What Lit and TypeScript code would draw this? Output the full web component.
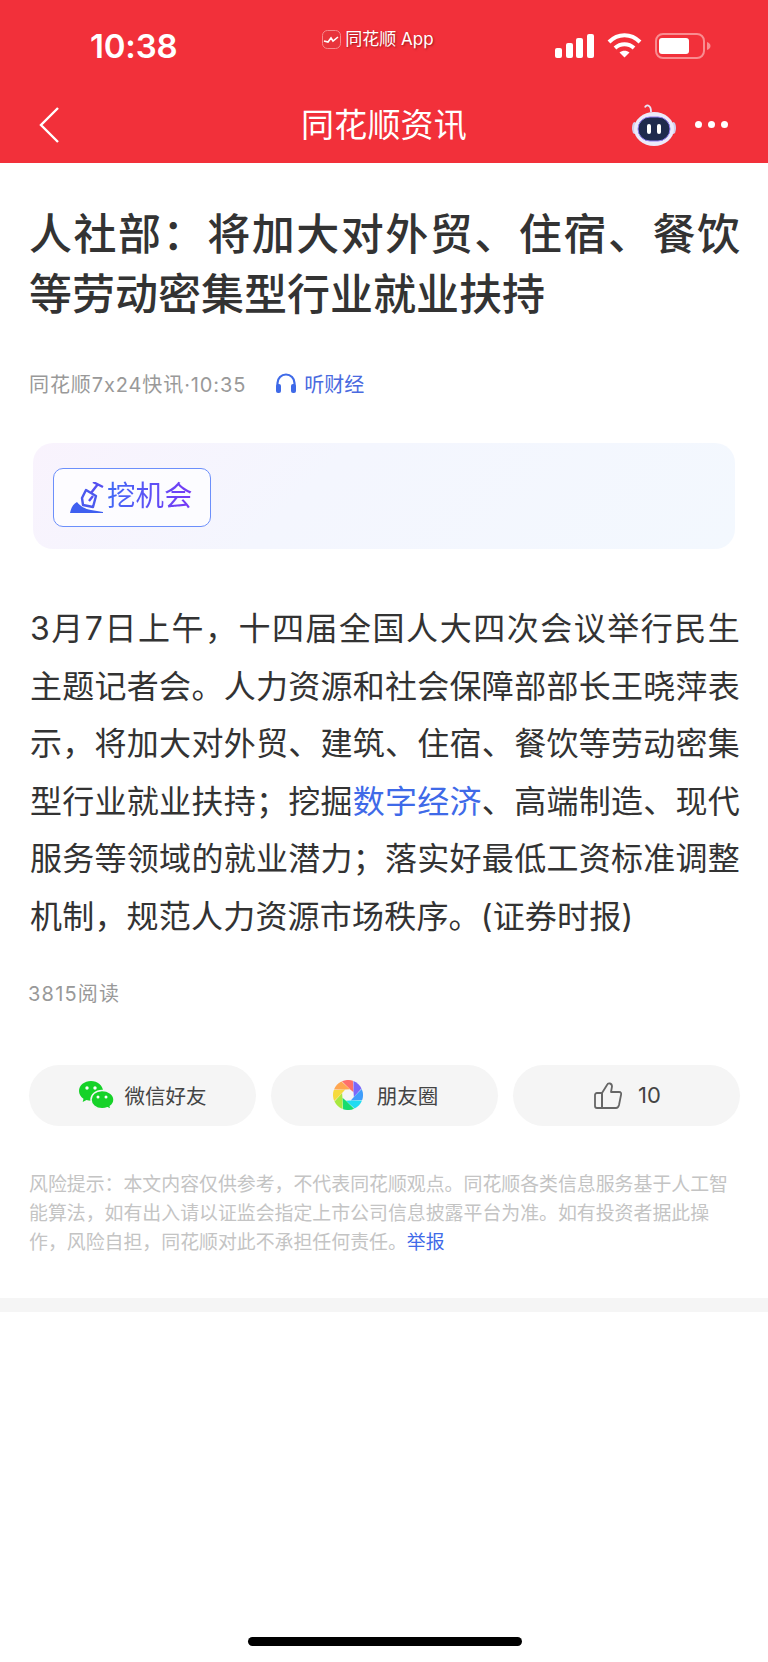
import { LitElement, html, css, svg } from "lit";
import { customElement } from "lit/decorators.js";

const COLORS = ["#ff6f6a", "#7b68fb", "#3f9dfb", "#1fdcf2", "#17dc6e", "#a9e83f", "#f6da3e", "#ffa650"];

/* One blade of the aperture logo: outer arc, then a straight edge back to the inner ring. */
function blade(i: number) {
  const r = 15, c = 15, hole = 6.2;
  const rad = (d: number) => (d * Math.PI) / 180;
  const a0 = i * 45 - 90 - 24, a1 = a0 + 43;
  const x0 = c + r * Math.cos(rad(a0)), y0 = c + r * Math.sin(rad(a0));
  const x1 = c + r * Math.cos(rad(a1)), y1 = c + r * Math.sin(rad(a1));
  const x2 = c + hole * Math.cos(rad(a1 + 45)), y2 = c + hole * Math.sin(rad(a1 + 45));
  const x3 = c + hole * Math.cos(rad(a1)), y3 = c + hole * Math.sin(rad(a1));
  return svg`<path d="M${x0.toFixed(2)} ${y0.toFixed(2)}A${r} ${r} 0 0 1 ${x1.toFixed(2)} ${y1.toFixed(2)}L${x2.toFixed(2)} ${y2.toFixed(2)}L${x3.toFixed(2)} ${y3.toFixed(2)}Z" fill=${COLORS[i]}></path>`;
}

@customElement("app-root")
export class AppRoot extends LitElement {
  static styles = css`
    :host {
      display: block;
      position: relative;
      width: 768px;
      height: 1662px;
      background: #fff;
      overflow: hidden;
      font-family: Inter, "Noto Sans CJK SC", "Noto Sans", sans-serif;
      color: #333;
    }
    .top {
      height: 163px;
      background: #f2303a;
      color: #fff;
      display: flex;
      flex-direction: column;
      box-sizing: border-box;
    }
    .status {
      height: 88px;
      display: grid;
      grid-template-columns: 1fr auto 1fr;
      align-items: start;
    }
    .time {
      font-weight: 600;
      font-size: 33px;
      line-height: 38px;
      margin: 27px 0 0 90px;
      letter-spacing: -0.2px;
    }
    .appl {
      display: flex;
      align-items: center;
      gap: 4px;
      margin: 29px 0 0 -12px;
      font-size: 17px;
      line-height: 20px;
      text-shadow: 1px 1px 2px rgba(90, 0, 0, 0.55);
    }
    .sys {
      display: flex;
      align-items: center;
      justify-content: flex-end;
      gap: 13px;
      margin: 33px 57px 0 0;
      height: 25px;
    }
    .nav {
      flex: 1;
      display: grid;
      grid-template-columns: 1fr auto 1fr;
      align-items: center;
      padding-bottom: 2px;
    }
    .back {
      margin-left: 38px;
      display: block;
    }
    .navt {
      font-size: 33px;
      line-height: 44px;
      letter-spacing: 0.2px;
    }
    .acts {
      display: flex;
      align-items: center;
      justify-content: flex-end;
      gap: 19px;
      padding-right: 40px;
    }
    .dots {
      display: flex;
      gap: 6px;
    }
    .dots i {
      width: 7px;
      height: 7px;
      border-radius: 50%;
      background: #fff;
    }
    main {
      padding: 0 28px 0 30px;
    }
    h1 {
      margin: 41px 0 0 -1px;
      font-size: 43px;
      line-height: 60px;
      font-weight: 500;
      color: #333;
      text-align: justify;
    }
    .meta {
      margin: 41px 0 0 -1px;
      display: flex;
      align-items: center;
      height: 36px;
      font-size: 20px;
      color: #999;
    }
    .src {
      letter-spacing: 0.9px;
    }
    .listen {
      margin-left: 29px;
      display: flex;
      align-items: center;
      gap: 7px;
      color: #4a6ae0;
    }
    .card {
      margin: 42px 5px 0 3px;
      height: 106px;
      border-radius: 20px;
      background: linear-gradient(135deg, #f9f3fd 0%, #f4f6fe 40%, #f3f8fe 100%);
      padding: 25px 20px;
      box-sizing: border-box;
    }
    .tag {
      display: inline-flex;
      align-items: center;
      gap: 3px;
      box-sizing: border-box;
      width: 158px;
      height: 59px;
      padding-left: 15px;
      border: 1px solid #6c8ffb;
      border-radius: 10px;
      background: rgba(255, 255, 255, 0.7);
    }
    .tagt {
      font-size: 28.5px;
      line-height: 40px;
      margin-top: -4px;
      background: linear-gradient(100deg, #3f6cf6, #7a35f5);
      -webkit-background-clip: text;
      background-clip: text;
      color: transparent;
    }
    .body {
      margin: 51px 0 0;
      font-size: 32px;
      line-height: 57.6px;
      letter-spacing: 0.2px;
      color: #333;
      text-align: justify;
    }
    .body a {
      color: #3f6ae8;
    }
    .reads {
      margin: 33px 0 0 -2px;
      font-size: 20px;
      line-height: 30px;
      letter-spacing: 1.2px;
      color: #999;
    }
    .btns {
      margin: 56px 0 0 -1px;
      display: grid;
      grid-template-columns: repeat(3, 227px);
      gap: 15px;
    }
    .btn {
      height: 61px;
      border-radius: 31px;
      background: #f5f5f5;
      display: flex;
      align-items: center;
      justify-content: center;
      gap: 11px;
      font-size: 20.5px;
      color: #444;
    }
    .moments {
      gap: 14px;
      padding-left: 2px;
    }
    .like {
      gap: 16px;
      padding-left: 2px;
    }
    .count {
      font-size: 22px;
    }
    .risk {
      margin: 44px 0 0 -1px;
      font-size: 18.9px;
      line-height: 29px;
      color: #c4c4c4;
    }
    .risk a {
      color: #3f6ae8;
    }
    .sep {
      height: 14px;
      margin-top: 41px;
      background: #f5f5f5;
    }
    .home {
      position: absolute;
      left: 248px;
      top: 1637px;
      width: 274px;
      height: 9px;
      border-radius: 5px;
      background: #000;
    }
    svg {
      display: block;
      flex: none;
    }
  `;

  render() {
    return html`
      <div class="top">
        <div class="status">
          <div class="time">10:38</div>
          <div class="appl">
            <svg width="19" height="19" viewBox="0 0 19 19">
              <rect x="0.5" y="0.5" width="18" height="18" rx="5" fill="#e8343c" stroke="#f58a8e"></rect>
              <path d="M2 11l4 1 3-4 2 3 5-4" fill="none" stroke="#fff" stroke-width="1.6"></path>
            </svg>
            <span>同花顺 App</span>
          </div>
          <div class="sys">
            <svg width="39" height="25" viewBox="0 0 39 25" fill="#fff">
              <rect x="0" y="15" width="7" height="10" rx="2"></rect>
              <rect x="11" y="10" width="7" height="15" rx="2"></rect>
              <rect x="21" y="5" width="7" height="20" rx="2"></rect>
              <rect x="32" y="1" width="7" height="24" rx="2"></rect>
            </svg>
            <svg width="35" height="25" viewBox="0 0 35 25" fill="none" stroke="#fff" stroke-width="4">
              <path d="M2 9C11 0 24 0 33 9"></path>
              <path d="M8 15C13.500 10 21.500 10 27 15"></path>
              <path d="M12.500 19.500L17.500 24.500L22.500 19.500C19.500 17 15.500 17 12.500 19.500Z" fill="#fff" stroke="none"></path>
            </svg>
            <svg width="56" height="26" viewBox="0 0 56 26">
              <rect x="1" y="1" width="48" height="24" rx="7" fill="none" stroke="#f98c90" stroke-width="2"></rect>
              <rect x="4" y="5" width="30" height="16" rx="3" fill="#fff"></rect>
              <path d="M52 9c2.500 .8 3.500 2.500 3.500 4s-1 3.200-3.500 4z" fill="#f98c90"></path>
            </svg>
          </div>
        </div>
        <div class="nav">
          <svg class="back" width="23" height="38" viewBox="0 0 23 38" fill="none" stroke="#fff" stroke-width="2.400">
            <path d="M20 2L3 19L20 36"></path>
          </svg>
          <div class="navt">同花顺资讯</div>
          <div class="acts">
            <svg width="44" height="42" viewBox="0 0 44 42">
              <path d="M13 3.500a2.500 2.500 0 0 1 4-1.500c1.500 .8 2 2.500 2 6" fill="none" stroke="#e6e6f8" stroke-width="1.800"></path>
              <ellipse cx="2.500" cy="24" rx="2.500" ry="6" fill="#cfd0ee"></ellipse>
              <ellipse cx="41.500" cy="24" rx="2.500" ry="6" fill="#cfd0ee"></ellipse>
              <ellipse cx="22" cy="25" rx="20" ry="17" fill="#eceafa"></ellipse>
              <rect x="6" y="13" width="32" height="24" rx="12" fill="#1f2a4d" stroke="#8f7df0" stroke-width="1"></rect>
              <rect x="15" y="20" width="4" height="10" rx="2" fill="#fff"></rect>
              <rect x="25" y="20" width="4" height="10" rx="2" fill="#fff"></rect>
            </svg>
            <div class="dots"><i></i><i></i><i></i></div>
          </div>
        </div>
      </div>
      <main>
        <h1>人社部&#xFF1A;将加大对外贸、住宿、餐饮等劳动密集型行业就业扶持</h1>
        <div class="meta">
          <span class="src">同花顺7x24快讯·10:35</span>
          <span class="listen">
            <svg width="22" height="22" viewBox="0 0 22 22" fill="none">
              <path d="M2.500 14V11a8.500 8.500 0 0 1 17 0v3" stroke="#3f6ae8" stroke-width="2.200"></path>
              <rect x="1" y="12" width="5" height="9" rx="2" fill="#3f6ae8"></rect>
              <rect x="16" y="12" width="5" height="9" rx="2" fill="#3f6ae8"></rect>
            </svg>
            听财经
          </span>
        </div>
        <div class="card">
          <div class="tag">
            <svg width="35" height="32" viewBox="0 0 35 32">
              <path d="M1 31C2 26 4 22 8 20C11 24 16 27 22 28L34 30L34 31Z" fill="#3f5ff0"></path>
              <path d="M17 8L27 14L24 25L14 23L13 16Z" fill="none" stroke="#4b59ee" stroke-width="2.400" stroke-linejoin="round"></path>
              <path d="M22 11L29 2M24 0L34 5M20 19L24 14" fill="none" stroke="#5550f0" stroke-width="2.400"></path>
            </svg>
            <span class="tagt">挖机会</span>
          </div>
        </div>
        <p class="body">3月7日上午&#xFF0C;十四届全国人大四次会议举行民生主题记者会。人力资源和社会保障部部长王晓萍表示&#xFF0C;将加大对外贸、建筑、住宿、餐饮等劳动密集型行业就业扶持&#xFF1B;挖掘<a>数字经济</a>、高端制造、现代服务等领域的就业潜力&#xFF1B;落实好最低工资标准调整机制&#xFF0C;规范人力资源市场秩序。(证券时报)</p>
        <div class="reads">3815阅读</div>
        <div class="btns">
          <div class="btn">
            <svg width="35" height="29" viewBox="0 0 35 29" fill="#16d228">
              <path d="M12 0C5.500 0 0 4.300 0 10c0 3.200 1.700 5.800 4.500 7.700L3.700 21l3.800-2a14 14 0 0 0 4.500.7c7 0 12-4.400 12-9.700S18.500 0 12 0z"></path>
              <path d="M23 9.500c6.500 0 12 4 12 9.200 0 2.700-1.500 5-3.700 6.600l.8 3.200-3.600-1.800a13 13 0 0 1-5.500 1c-6.500 0-11-4.200-11-9s4.500-9.200 11-9.200z" stroke="#f5f5f5" stroke-width="1.500"></path>
              <circle cx="8" cy="7" r="1.700" fill="#fff"></circle>
              <circle cx="16" cy="7" r="1.700" fill="#fff"></circle>
              <circle cx="19" cy="16" r="1.500" fill="#fff"></circle>
              <circle cx="27" cy="16" r="1.500" fill="#fff"></circle>
            </svg>
            微信好友
          </div>
          <div class="btn moments">
            <svg width="30" height="30" viewBox="0 0 30 30">
              ${COLORS.map((_, i) => blade(i))}
            </svg>
            朋友圈
          </div>
          <div class="btn like">
            <svg width="28" height="27" viewBox="0 0 28 27" fill="none" stroke="#666" stroke-width="1.800" stroke-linejoin="round">
              <path d="M8 11L13 3C14 .5 18 1 18 4.500L17 10H25C27 10 27.500 11.500 27 13L25 23C24.500 25 23.500 26 22 26H8Z"></path>
              <path d="M8 11H3C1.800 11 1 12 1 13V24C1 25 1.800 26 3 26H8Z"></path>
            </svg>
            <span class="count">10</span>
          </div>
        </div>
        <p class="risk">风险提示&#xFF1A;本文内容仅供参考&#xFF0C;不代表同花顺观点。同花顺各类信息服务基于人工智能算法&#xFF0C;如有出入请以证监会指定上市公司信息披露平台为准。如有投资者据此操作&#xFF0C;风险自担&#xFF0C;同花顺对此不承担任何责任。<a>举报</a></p>
      </main>
      <div class="sep"></div>
      <div class="home"></div>
    `;
  }
}
